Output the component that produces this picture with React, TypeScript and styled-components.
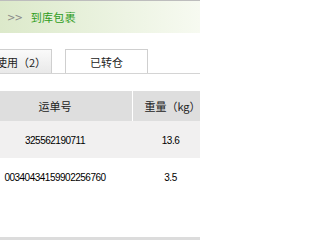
import React from "react";
import styled, { createGlobalStyle } from "styled-components";

const Global = createGlobalStyle`
  html, body { margin: 0; padding: 0; background: #fff; overflow: hidden; }
  body { width: 200px; height: 240px; font-family: "Liberation Sans", "Noto Sans CJK SC", sans-serif; }
`;

const Page = styled.div`
  width: 200px;
  height: 240px;
  overflow: hidden;
  display: flex;
  flex-direction: column;
  position: relative;
`;

const Header = styled.div`
  height: 32px;
  border-top: 1px solid #bdbdbd;
  background: linear-gradient(to right, #dce9ca 0%, #e8f1dc 45%, #f7faf1 100%);
  display: flex;
  align-items: center;
  padding-left: 7px;
  gap: 9px;
`;

const Arrows = styled.span`
  font-family: "DejaVu Sans", sans-serif;
  font-size: 10px;
  color: #8a8a8a;
  letter-spacing: -1px;
  margin-top: 1px;
`;

const Title = styled.span`
  font-family: "Noto Sans CJK SC", sans-serif;
  font-size: 11px;
  color: #2e9c1c;
  letter-spacing: 0.3px;
`;

const Tabs = styled.div`
  margin-top: 16px;
  margin-left: -31px;
  display: flex;
  gap: 13px;
  height: 24px;
  border-bottom: 1px solid #d4d4d4;
  width: 260px;
`;

const Tab = styled.div<{ $active?: boolean }>`
  width: 83px;
  box-sizing: border-box;
  height: 24px;
  border: 1px solid #cfcfcf;
  border-bottom: none;
  background: ${(p) => (p.$active ? "linear-gradient(#fafafa, #e9e9e9)" : "#fff")};
  display: flex;
  align-items: center;
  justify-content: center;
  padding-left: ${(p) => (p.$active ? "10px" : "0")};
  font-family: "Noto Sans CJK SC", sans-serif;
  font-size: 11px;
  color: #222;
`;

const Table = styled.div`
  margin-top: 17px;
  margin-left: -22px;
  display: grid;
  grid-template-columns: 154px 1px 75px;
`;

const HeadCell = styled.div<{ $shift?: number }>`
  height: 30px;
  background: #dedede;
  display: flex;
  align-items: center;
  justify-content: center;
  padding-left: ${(p) => p.$shift ?? 0}px;
  font-family: "Noto Sans CJK SC", sans-serif;
  font-size: 11px;
  color: #222;
`;

const Divider = styled.div<{ $bg: string }>`
  background: ${(p) => p.$bg};
`;

const Cell = styled.div<{ $bg: string }>`
  height: 37px;
  background: ${(p) => p.$bg};
  display: flex;
  align-items: center;
  justify-content: center;
  font-family: "Liberation Sans", sans-serif;
  font-size: 10px;
  letter-spacing: -0.5px;
  color: #000;
  padding-top: 1px;
  box-sizing: border-box;
`;

const Footer = styled.div`
  position: absolute;
  left: 0;
  right: 0;
  bottom: 0;
  height: 3px;
  background: #dcdcdc;
`;

const rows = [
  { no: "325562190711", w: "13.6", bg: "#f1f0f0" },
  { no: "00340434159902256760", w: "3.5", bg: "#ffffff" },
];

export default function App() {
  return (
    <Page>
      <Global />
      <Header>
        <Arrows>&gt;&gt;</Arrows>
        <Title>到库包裹</Title>
      </Header>
      <Tabs>
        <Tab $active>未使用（2）</Tab>
        <Tab>已转仓</Tab>
      </Tabs>
      <Table>
        <HeadCell>运单号</HeadCell>
        <Divider $bg="#ffffff" />
        <HeadCell $shift={4}>重量（kg）</HeadCell>
        {rows.map((r) => (
          <React.Fragment key={r.no}>
            <Cell $bg={r.bg}>{r.no}</Cell>
            <Divider $bg={r.bg} />
            <Cell $bg={r.bg}>{r.w}</Cell>
          </React.Fragment>
        ))}
      </Table>
      <Footer />
    </Page>
  );
}
